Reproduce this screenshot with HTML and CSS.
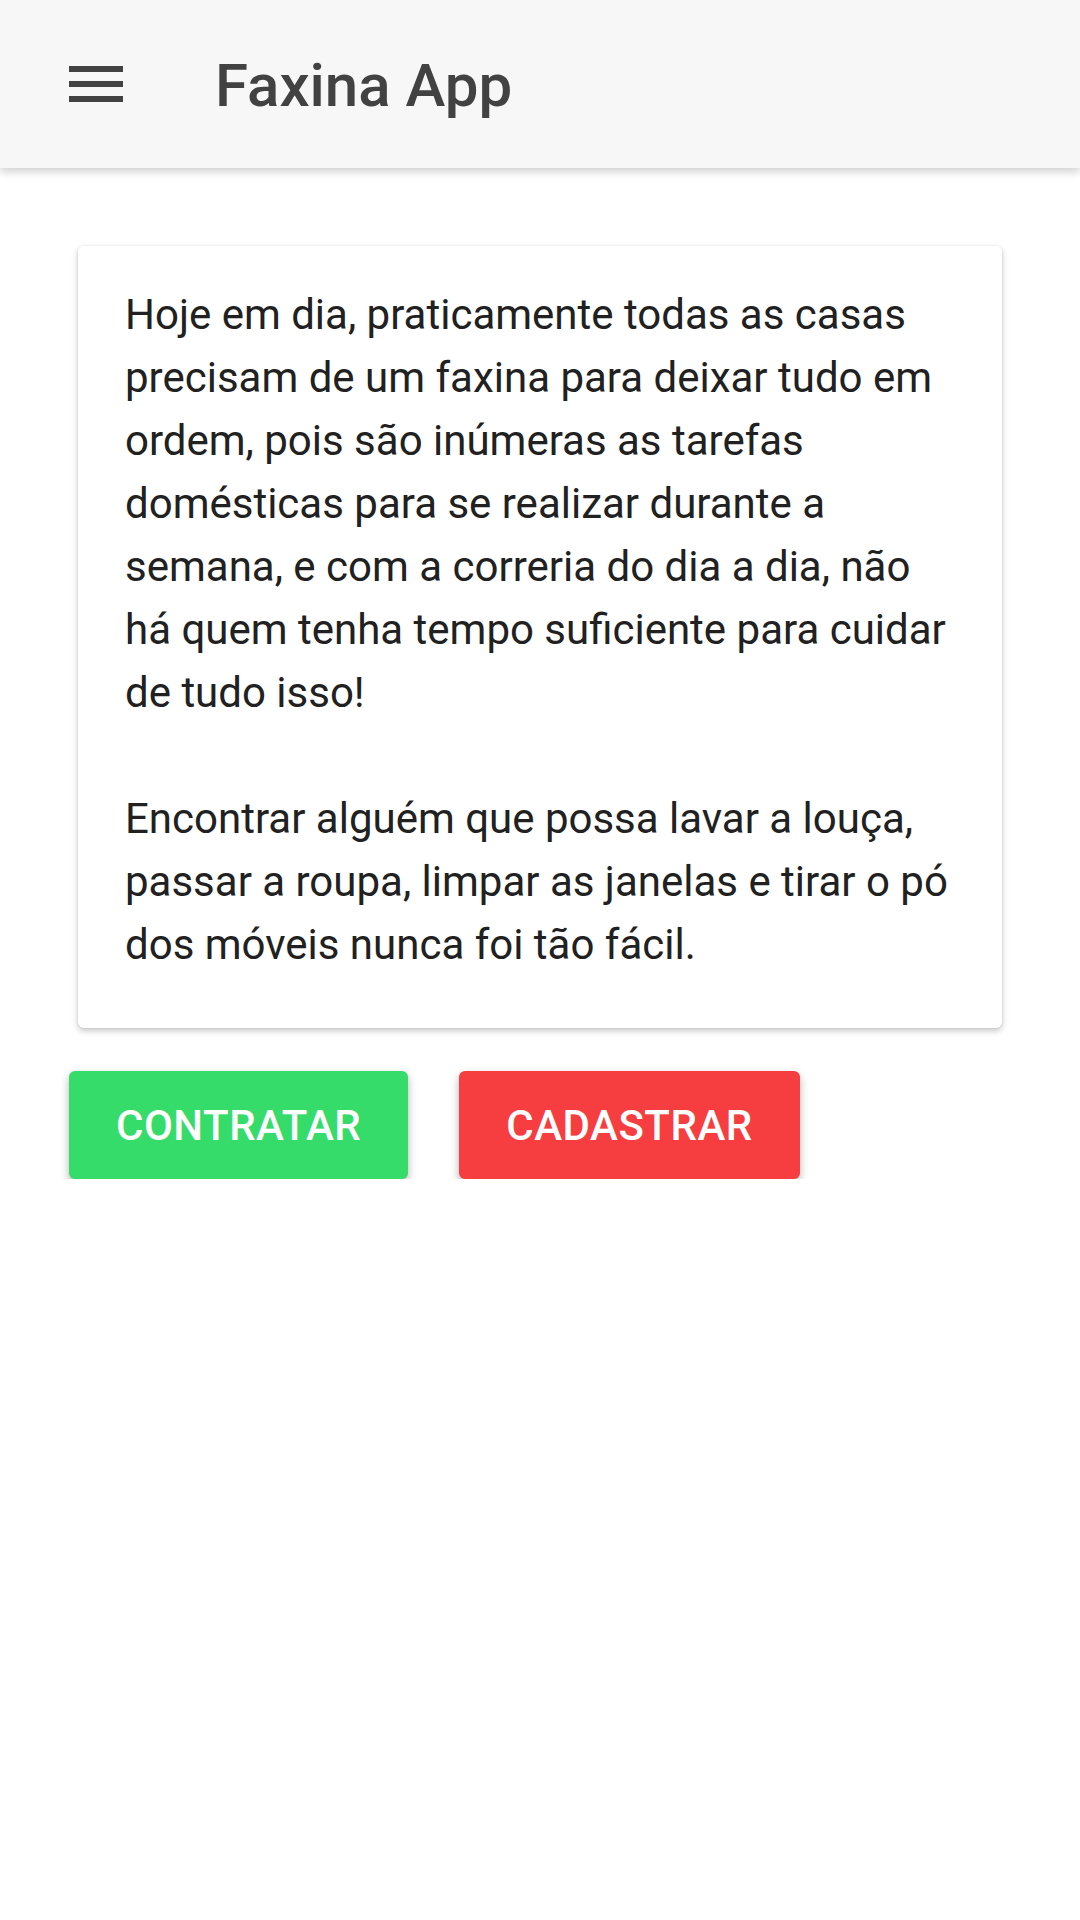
FILE: index.html
```html
<!DOCTYPE html>
<html lang="pt-BR">
<head>
<meta charset="utf-8">
<title>Faxina App</title>
<link rel="stylesheet" href="styles.css">
</head>
<body>
<header class="toolbar">
  <svg class="menu-icon" width="54" height="36" viewBox="0 0 54 36" aria-hidden="true">
    <rect x="0" y="0" width="54" height="6" fill="#424242"/>
    <rect x="0" y="15" width="54" height="6" fill="#424242"/>
    <rect x="0" y="30" width="54" height="6" fill="#424242"/>
  </svg>
  <h1 class="title">Faxina App</h1>
</header>
<main class="content">
  <section class="card">
    <p class="card-text">Hoje em dia, praticamente todas as casas precisam de um faxina para deixar tudo em ordem, pois são inúmeras as tarefas domésticas para se realizar durante a semana, e com a correria do dia a dia, não há quem tenha tempo suficiente para cuidar de tudo isso!</p>
    <p class="card-text">Encontrar alguém que possa lavar a louça, passar a roupa, limpar as janelas e tirar o pó dos móveis nunca foi tão fácil.</p>
  </section>
  <div class="actions">
    <button class="btn btn-green">CONTRATAR</button>
    <button class="btn btn-red">CADASTRAR</button>
  </div>
</main>
</body>
</html>
```

FILE: styles.css
```css
html, body {
  margin: 0;
  padding: 0;
  background: #ffffff;
  font-family: Roboto, "Noto Sans", "Liberation Sans", sans-serif;
}

.toolbar {
  height: 168px;
  background: #f7f7f7;
  display: flex;
  align-items: center;
  padding-left: 69px;
  box-shadow: 0 4px 8px rgba(0, 0, 0, 0.18);
  position: relative;
  z-index: 1;
}

.menu-icon {
  display: block;
  flex: none;
}

.title {
  margin: 0 0 0 92px;
  font-size: 60px;
  font-weight: 500;
  color: #424242;
  line-height: 1;
  padding-top: 4px;
}

.content {
  padding-top: 78px;
}

.card {
  margin: 0 78px;
  background: #fff;
  border-radius: 6px;
  box-shadow: 0 3px 6px rgba(0, 0, 0, 0.22), 0 0 3px rgba(0, 0, 0, 0.08);
  padding: 37px 43px 52px 47px;
}

.card-text {
  margin: 0 0 63px 0;
  font-size: 42px;
  line-height: 63px;
  color: #212121;
}

.card-text:last-child {
  margin-bottom: 0;
}

.actions {
  display: flex;
  gap: 51px;
  margin: 43px 0 0 69px;
}

.btn {
  height: 108px;
  border: none;
  border-radius: 6px;
  padding: 0 47px;
  font-family: Roboto, "Noto Sans", "Liberation Sans", sans-serif;
  font-size: 42px;
  font-weight: 500;
  letter-spacing: 0.5px;
  color: #ffffff;
  box-shadow: 0 4px 8px rgba(0, 0, 0, 0.3);
  cursor: pointer;
}

.btn-green {
  background: #35dc6a;
}

.btn-red {
  background: #f63d40;
}
```
